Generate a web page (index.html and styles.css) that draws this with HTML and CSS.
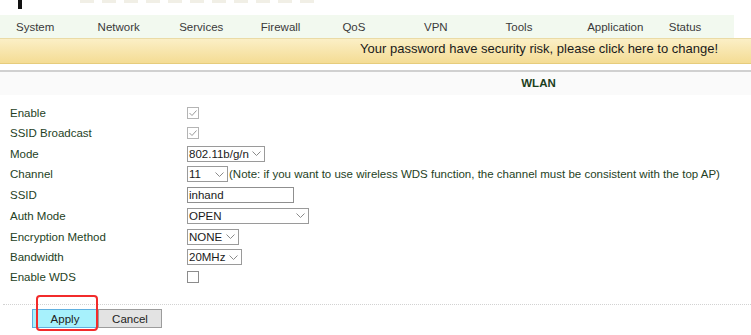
FILE: index.html
```html
<!DOCTYPE html>
<html lang="en">

<head>
    <meta charset="UTF-8">
    <title>WLAN</title>
    <link rel="stylesheet" href="styles.css">
</head>

<body>
    <div class="logo">
        <span class="logo-mark"></span>
        <span class="logo-trace"></span>
    </div>

    <div class="nav">
        <a>System</a>
        <a>Network</a>
        <a>Services</a>
        <a>Firewall</a>
        <a>QoS</a>
        <a>VPN</a>
        <a>Tools</a>
        <a>Application</a>
        <a>Status</a>
    </div>

    <div class="notice">Your password have security risk, please click here to change!</div>

    <div class="page">
        <div class="title">WLAN</div>

        <div class="form">
            <div class="row">
                <label>Enable</label>
                <span class="check"><svg viewBox="0 0 10 10"><path d="M1.5 5L4 7.5L8.5 2.5" /></svg></span>
            </div>
            <div class="row">
                <label>SSID Broadcast</label>
                <span class="check"><svg viewBox="0 0 10 10"><path d="M1.5 5L4 7.5L8.5 2.5" /></svg></span>
            </div>
            <div class="row tall">
                <label>Mode</label>
                <span class="select w-mode">802.11b/g/n<svg viewBox="0 0 9 5"><path d="M0.5 0.5L4.5 4.5L8.5 0.5" /></svg></span>
            </div>
            <div class="row">
                <label>Channel</label>
                <span class="select w-channel">11<svg viewBox="0 0 9 5"><path d="M0.5 0.5L4.5 4.5L8.5 0.5" /></svg></span>
                <span class="note">(Note: if you want to use wireless WDS function, the channel must be consistent with the top AP)</span>
            </div>
            <div class="row tall">
                <label>SSID</label>
                <span class="text-input">inhand</span>
            </div>
            <div class="row tall">
                <label>Auth Mode</label>
                <span class="select w-auth">OPEN<svg viewBox="0 0 9 5"><path d="M0.5 0.5L4.5 4.5L8.5 0.5" /></svg></span>
            </div>
            <div class="row tall">
                <label>Encryption Method</label>
                <span class="select w-enc">NONE<svg viewBox="0 0 9 5"><path d="M0.5 0.5L4.5 4.5L8.5 0.5" /></svg></span>
            </div>
            <div class="row">
                <label>Bandwidth</label>
                <span class="select w-band">20MHz<svg viewBox="0 0 9 5"><path d="M0.5 0.5L4.5 4.5L8.5 0.5" /></svg></span>
            </div>
            <div class="row">
                <label>Enable WDS</label>
                <span class="check empty"></span>
            </div>

            <div class="actions">
                <button class="btn btn-apply">Apply</button>
                <button class="btn">Cancel</button>
                <span class="highlight"></span>
            </div>
        </div>
    </div>
</body>

</html>
```

FILE: styles.css
```css
html,
body {
    margin: 0;
    font-family: 'Liberation Sans', Arial, sans-serif;
    background: #fff;
    color: #222;
    overflow: hidden;
}

.logo {
    display: flex;
    align-items: flex-start;
    height: 15px;
}

.logo-mark {
    width: 4px;
    height: 9px;
    margin-left: 18px;
    background: #111;
}

.logo-trace {
    width: 240px;
    height: 3px;
    margin-left: 58px;
    background: repeating-linear-gradient(90deg, #f1efe6 0 14px, transparent 14px 22px);
}

.nav {
    display: grid;
    grid-template-columns: repeat(9, 81.6px);
    align-items: center;
    width: 734px;
    height: 23px;
    background: #f2f9ef;
    font-size: 11.5px;
    color: #3a3a3a;
}

.nav a {
    padding-left: 16px;
}

.notice {
    height: 19px;
    padding: 0 33px 5px 0;
    line-height: 19px;
    text-align: right;
    font-size: 13px;
    color: #1a1a1a;
    background: linear-gradient(#fbefc6, #f4dc94);
    border-top: 1px solid #eadba6;
    border-bottom: 1px solid #e6cc7c;
}

.page {
    margin-top: 6px;
    border-top: 2px solid #d0d0d0;
}

.title {
    height: 23px;
    line-height: 23px;
    padding-left: 326px;
    text-align: center;
    font-size: 11.5px;
    font-weight: bold;
    color: #1c401c;
    background: #fafafa;
}

.form {
    margin-left: 3px;
    padding-top: 8px;
    background: #fff;
}

.row {
    display: flex;
    align-items: center;
    height: 20px;
    font-size: 11.5px;
    color: #253f25;
}

.row.tall {
    height: 21px;
}

.row label {
    box-sizing: border-box;
    width: 184px;
    padding-left: 7px;
}

.check {
    box-sizing: border-box;
    display: flex;
    width: 12px;
    height: 12px;
    border: 1px solid #b4b4b4;
    background: #fff;
}

.check svg {
    width: 10px;
    height: 10px;
    fill: none;
    stroke: #9a9a9a;
    stroke-width: 1;
}

.check.empty {
    border-color: #8c8c8c;
}

.select,
.text-input {
    box-sizing: border-box;
    display: flex;
    align-items: center;
    justify-content: space-between;
    height: 16px;
    padding: 0 3px 0 1px;
    border: 1px solid #9a9a9a;
    background: #fff;
    color: #1a1a1a;
    font-size: 11.5px;
}

.select svg {
    width: 9px;
    height: 5px;
    fill: none;
    stroke: #8a8a8a;
    stroke-width: 1;
}

.w-mode {
    width: 78px;
}

.w-channel {
    width: 41px;
}

.w-auth {
    width: 122px;
}

.w-enc {
    width: 52px;
}

.w-band {
    width: 55px;
}

.text-input {
    width: 107px;
    border-color: #8f8f8f;
}

.note {
    margin-left: 1px;
}

.actions {
    position: relative;
    display: flex;
    margin-top: 17px;
    padding: 4px 0 6px 29px;
    border-top: 1px dotted #d2d2d2;
}

.btn {
    height: 19px;
    width: 64px;
    margin: 0;
    padding: 0;
    font-family: inherit;
    font-size: 11.5px;
    color: #222;
    background: #e3e3e3;
    border: 1px solid #9c9c9c;
    border-radius: 0;
}

.btn-apply {
    width: 66px;
    background: #a7f1fc;
    border-color: #5fb0e0;
    border-right-color: #9c9c9c;
}

.highlight {
    position: absolute;
    left: 33px;
    top: -10px;
    box-sizing: border-box;
    width: 62px;
    height: 36px;
    border: 2px solid #f22b2b;
    border-radius: 4px;
}
```
